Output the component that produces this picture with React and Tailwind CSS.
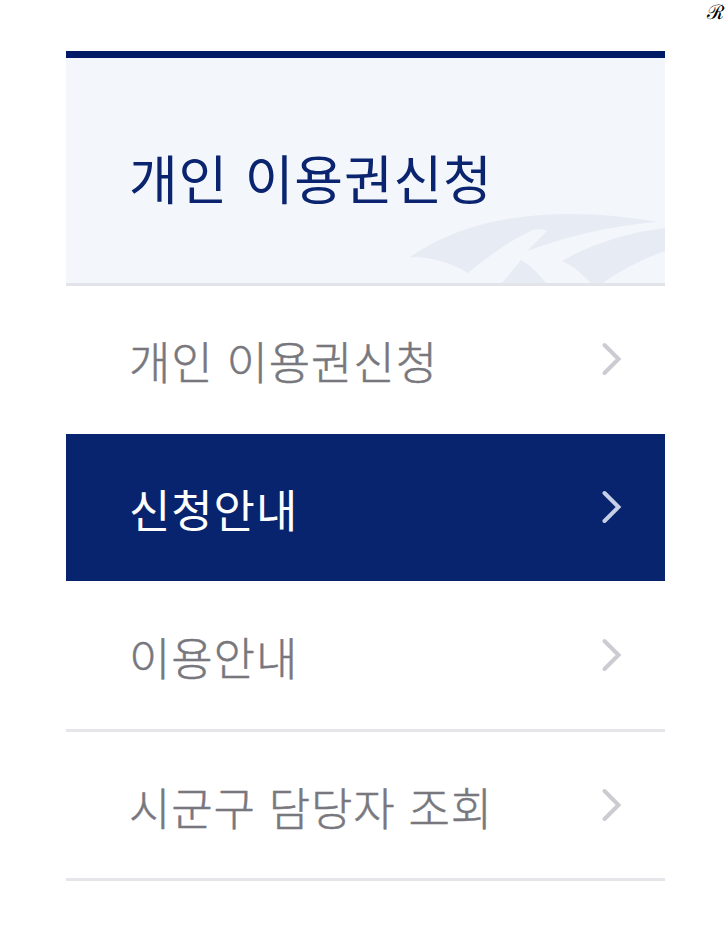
import clsx from 'clsx';

const menuItems = [
  { label: '개인 이용권신청', size: 'h-[147px] pb-[3px]' },
  { label: '신청안내', size: 'h-[147px] pb-px', active: true },
  { label: '이용안내', size: 'h-[151px] border-b-[3px]' },
  { label: '시군구 담당자 조회', size: 'h-[149px] border-b-[3px]' },
];

function Chevron({ active }) {
  return (
    <svg
      viewBox="0 0 24 36"
      fill="none"
      strokeWidth="4"
      strokeLinecap="round"
      className={clsx('w-6 h-9 shrink-0', active ? 'stroke-[#c6cfe6]' : 'stroke-[#cbcbd2]')}
    >
      <path d="M4.5 4 18.5 18 4.5 32" />
    </svg>
  );
}

function WingMark() {
  return (
    <svg viewBox="0 0 260 74" className="absolute right-0 bottom-0 w-[260px] h-[74px] fill-[#e7ebf4]">
      <path d="M5 48C50 17 105 5 165 5c32 0 60 3 87 8-48 4-93 15-130 29 8-8 13-13 20-20-4-2-9-2-14-1C106 31 86 45 63 64 48 55 30 48 5 48Z" />
      <path d="M97 74 116 51c10 6 17 13 25 23Z" />
      <path d="M260 19v23c-22 8-43 18-62 32h-12c-8-8-17-17-29-22 28-16 63-28 103-33Z" />
    </svg>
  );
}

export default function App() {
  return (
    <div className="relative w-[728px] h-[931px] overflow-hidden bg-white pt-[51px] pl-[66px] font-['Noto_Sans_CJK_KR','Noto_Sans',sans-serif]">
      <span className="absolute top-0 right-[4px] text-[20px] leading-[24px] text-black font-['Liberation_Serif',serif]">ℛ</span>

      <nav className="w-[599px]">
        {/* Section title */}
        <div className="relative h-[235px] bg-[#f3f6fb] border-t-[7px] border-t-[#001a66] border-b-[3px] border-b-[#e3e4ea] pl-[63px] pt-[79px]">
          <WingMark />
          <h2 className="relative text-[53px] leading-[80px] tracking-[0.8px] [word-spacing:4px] text-[#0a246f] whitespace-nowrap">
            개인 이용권신청
          </h2>
        </div>

        {/* Menu */}
        <ul className="pt-px">
          {menuItems.map((item) => (
            <li
              key={item.label}
              className={clsx(
                'flex items-center justify-between pl-[63px] pr-[41px]',
                item.size,
                item.active
                  ? 'bg-[#08246f] text-white'
                  : 'border-[#e5e5ea] text-[#77777d] font-light [-webkit-text-stroke:0.5px_#77777d]'
              )}
            >
              <span className="pt-[3px] text-[45px] leading-[70px] tracking-[0.9px] [word-spacing:2px] whitespace-nowrap">
                {item.label}
              </span>
              <Chevron active={item.active} />
            </li>
          ))}
        </ul>
      </nav>
    </div>
  );
}
